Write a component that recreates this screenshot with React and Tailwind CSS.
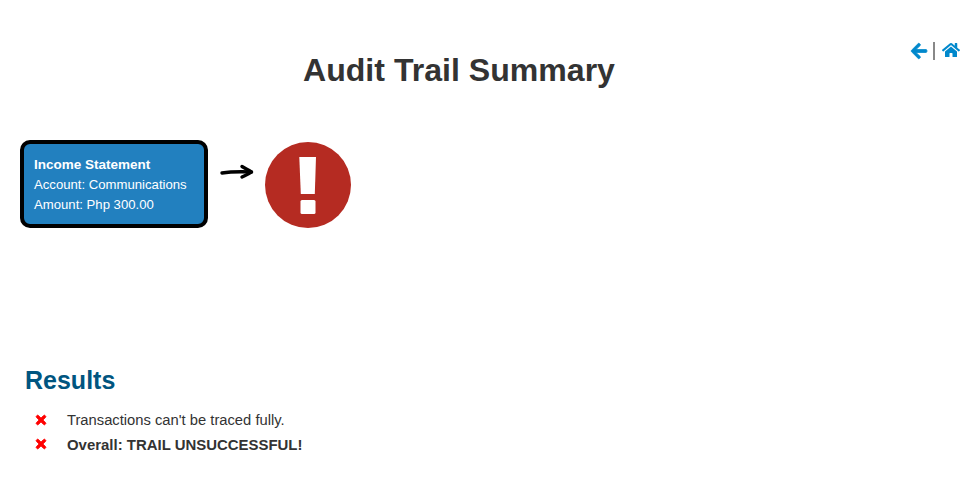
import { FaArrowLeft, FaHome, FaTimes } from 'react-icons/fa';

const results = [
  { text: "Transactions can't be traced fully.", bold: false },
  { text: 'Overall: TRAIL UNSUCCESSFUL!', bold: true },
];

const App = () => {
  return (
    <div className="h-[495px] bg-white font-['Liberation_Sans',Arial,sans-serif] text-[#333333] overflow-hidden">
      {/* Header */}
      <div className="flex items-start pt-[41px] pr-[10px]">
        <h1 className="flex-1 pl-[8px] text-center text-[32.1px] leading-[58px] font-bold">Audit Trail Summary</h1>
        <div className="flex items-center text-[#0088cc] h-[20px]">
          <FaArrowLeft className="w-[18px] h-[18px]" stroke="currentColor" strokeWidth={24} />
          <span className="w-[2px] h-[18px] bg-[#888888] ml-[5px] mr-[7px]" />
          <FaHome className="w-[18px] h-[16px] -mt-[2px]" />
        </div>
      </div>

      {/* Trail */}
      <div className="flex items-end pl-[20px] mt-[41px]">
        <div className="w-[188px] h-[88px] bg-[#2280bf] border-[4px] border-black rounded-[10px] pl-[10px] pt-[11px] text-white text-[13.15px] leading-[20px]">
          <div className="text-[13.5px] font-bold">Income Statement</div>
          <div>Account: Communications</div>
          <div>Amount: Php 300.00</div>
        </div>
        <svg className="ml-[12px] mb-[48px]" width="34" height="18" viewBox="0 0 34 18" fill="none" stroke="#000" strokeWidth="3.4" strokeLinecap="round" strokeLinejoin="round">
          <path d="M2 11 C10 9.800 20 9.600 31.500 10" />
          <path d="M22 4.500 C25 6.500 29 8 31.500 10 C29 12 25 13.500 22 15" />
        </svg>
        <svg className="ml-[11px]" width="86" height="86" viewBox="0 0 86 86">
          <circle cx="43" cy="43" r="43" fill="#b52b22" />
          <path d="M34.300 15 H51 L49.800 52 H35.800 Z" fill="#fff" />
          <rect x="35.500" y="58" width="15" height="14" rx="1.500" fill="#fff" />
        </svg>
      </div>

      {/* Results */}
      <div className="mt-[137px] pl-[25px]">
        <h2 className="text-[25px] leading-[30px] font-bold text-[#005580]">Results</h2>
        <ul className="mt-[13px] leading-[24.5px]">
          {results.map((item) => (
            <li key={item.text} className="flex items-center">
              <FaTimes className="w-[14px] h-[14px] ml-[9px] -mt-[1px] text-[#ff0000]" stroke="currentColor" strokeWidth={36} />
              <span className={`ml-[19px] ${item.bold ? 'text-[14.95px] font-bold' : 'text-[14.75px]'}`}>{item.text}</span>
            </li>
          ))}
        </ul>
      </div>
    </div>
  );
};

export default App;
